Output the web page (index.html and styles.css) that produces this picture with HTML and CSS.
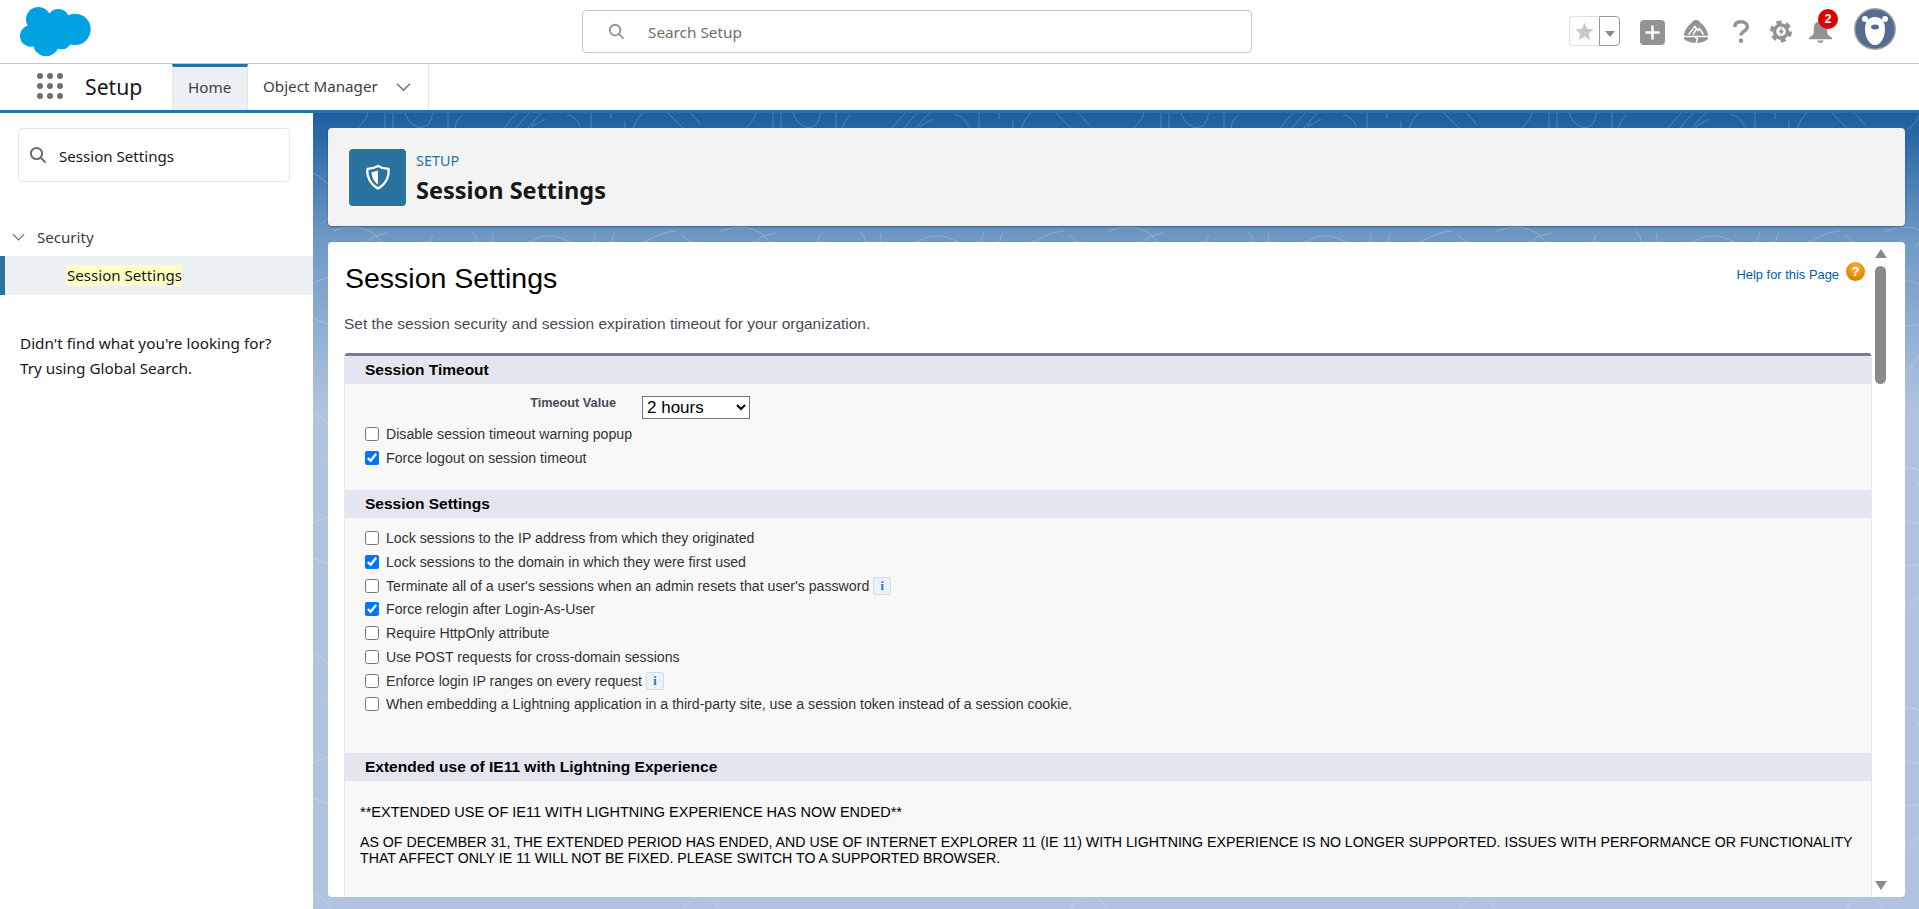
FILE: index.html
```html
<!DOCTYPE html>
<html lang="en">
<head>
    <meta charset="UTF-8">
    <title>Session Settings | Salesforce</title>
    <link rel="stylesheet" href="styles.css">
</head>
<body>
<header class="global-header">
    <svg class="logo" viewBox="0 0 300 186">
        <circle cx="85" cy="55" r="37"/>
        <circle cx="145" cy="57" r="33"/>
        <circle cx="195" cy="85" r="47"/>
        <circle cx="155" cy="115" r="30"/>
        <circle cx="108" cy="128" r="38"/>
        <circle cx="62" cy="105" r="32"/>
        <rect x="70" y="60" width="130" height="70"/>
    </svg>
    <div class="global-search">
        <svg class="search-icon" viewBox="0 0 18 18"><circle cx="7.500" cy="7.500" r="5.600"/><path d="M11.500 11.500l5 5"/></svg>
        <span>Search Setup</span>
    </div>
    <div class="global-actions">
        <div class="favorite">
            <span class="favorite-star">
                <svg viewBox="0 0 20 20"><path d="M10 0.800l2.800 6.200 6.700.7-5 4.500 1.400 6.600L10 15.400l-5.900 3.400 1.400-6.600-5-4.500 6.700-.7z"/></svg>
            </span>
            <span class="favorite-menu"></span>
        </div>
        <svg class="action action-plus" viewBox="0 0 25 25"><rect width="25" height="25" rx="4"/><path d="M12.500 5.500v14M5.500 12.500h14"/></svg>
        <svg class="action action-trail" viewBox="0 0 24 23">
            <path class="fill" d="M12 0c2.200 0 3.600 1.300 5 3.200 3 2.200 5.800 6 7 11.300v4.500c-3 2.500-7.500 4-12 4s-9-1.500-12-4v-4.500C1.200 9.200 4 5.400 7 3.200 8.400 1.300 9.800 0 12 0z"/>
            <path class="cut" d="M0 16.500h24M4.500 14.500l6.500-8 3 4 1.500-2 4 6M12.500 9l-3.500 5.500M10.500 16.500l3 2.500-1.500 4"/>
        </svg>
        <svg class="action action-help" viewBox="0 0 16 23"><path d="M1.800 7C1.800 3.200 4.500 1.800 8 1.800s6.300 1.700 6.300 4.900c0 4.500-6.300 4.300-6.300 8.800"/><circle cx="8" cy="20.700" r="2.300"/></svg>
        <svg class="action action-gear" viewBox="0 0 22 23">
            <circle class="gear-teeth" cx="11" cy="11.500" r="9"/>
            <circle class="gear-ring" cx="11" cy="11.500" r="6.500"/>
            <path class="gear-bolt" d="M12.500 6.500l-4 6h2.500l-1 4 4-6h-2.500z"/>
        </svg>
        <div class="bell-wrap">
            <svg class="action action-bell" viewBox="0 0 24 24"><path d="M12 1c4.500 0 7 3.500 7 8v4c0 2 2 3.500 5 5.500v1.500H0v-1.500C3 16.500 5 15 5 13V9c0-4.500 2.500-8 7-8z"/><path d="M8.500 21.500h7c-.5 1.700-2 2.500-3.500 2.500s-3-.8-3.500-2.500z"/></svg>
            <span class="bell-badge">2</span>
        </div>
        <svg class="avatar" viewBox="0 0 42 42">
            <circle class="avatar-bg" cx="21" cy="21" r="20.200"/>
            <circle class="avatar-face" cx="11" cy="11" r="3"/>
            <circle class="avatar-face" cx="31" cy="11" r="3"/>
            <path class="avatar-face" d="M21 9c7 0 10 5 10 12 0 8-4 16-10 16s-10-8-10-16c0-7 3-12 10-12z"/>
            <ellipse class="avatar-nose" cx="21" cy="19" rx="4" ry="2.500"/>
        </svg>
    </div>
</header>

<nav class="app-nav">
    <div class="launcher">
        <i></i><i></i><i></i><i></i><i></i><i></i><i></i><i></i><i></i>
    </div>
    <span class="app-name">Setup</span>
    <a class="tab tab-active">Home</a>
    <a class="tab tab-menu">Object Manager
        <svg class="chevron" viewBox="0 0 16 10"><path d="M1 1.500l7 7 7-7"/></svg>
    </a>
</nav>

<div class="workspace">
    <aside class="sidebar">
        <div class="quick-find">
            <svg class="search-icon dark" viewBox="0 0 18 18"><circle cx="7.500" cy="7.500" r="5.600"/><path d="M11.500 11.500l5 5"/></svg>
            <span>Session Settings</span>
        </div>
        <div class="tree-parent">
            <svg class="chevron small" viewBox="0 0 16 10"><path d="M1 1.500l7 7 7-7"/></svg>
            <span>Security</span>
        </div>
        <div class="tree-item"><mark>Session Settings</mark></div>
        <p class="tree-hint">Didn't find what you're looking for?<br>Try using Global Search.</p>
    </aside>

    <main class="main">
        <svg class="topo" width="100%" height="100%">
            <defs>
                <pattern id="topo-lines" width="388" height="240" patternUnits="userSpaceOnUse">
                    <path d="M55 0c-3 8-8 14-13 17M72 0v16M80 0v16M92 0c4 12 16 20 24 10 4-6 2-8 4-10M135 0v16M150 2c-6 4-8 10-8 14M190 16l14-16M202 16l14-16M214 16l14-16M232 6l-14 8M254 2c8 0 10 6 14 12M278 0v16M298 0v6M312 8v8M330 0c-6 6-8 10-10 16M355 0l16 16M378 0l10 12"/>
                    <path d="M20 118c20-8 40-4 50 14M75 120c-14 2-20 6-24 14M120 122c-4 4-4 12 0 18M136 130c-3 6 1 12 6 8s0-10-6-8M158 118c8 6 8 16 2 22M180 120c-2 8 0 14 4 18M210 134c14-14 34-14 48-4 14 8 24 4 24-12M302 120c-4 6-4 14-6 22M330 130c10-6 24-12 34-12M368 122c10 8 16 12 20 10"/>
                    <path d="M0 170c30-16 50 8 80 2s40-30 80-14 50 24 90 8 70-10 138 2"/>
                    <path d="M0 60c20 10 30 30 10 50M388 60c-20 10-30 30-10 50M0 205c40 20 70-4 110 6s60 20 110 2 90-10 168 2"/>
                </pattern>
            </defs>
            <rect width="100%" height="100%" fill="url(#topo-lines)"/>
        </svg>

        <section class="page-header">
            <div class="page-icon">
                <svg viewBox="0 0 26 26">
                    <path class="shield-line" d="M13 2c3 1.800 6.500 2.800 10.500 2.800 1.300 7.500-3 15.700-10.500 19.700C5.500 20.500 1.200 12.300 2.500 4.800 6.500 4.800 10 3.800 13 2z"/>
                    <path class="shield-fill" d="M13 6.500c-2 .9-4.200 1.500-6.500 1.700 0 4.800 2.500 9.500 6.500 12.300z"/>
                </svg>
            </div>
            <div class="page-heading">
                <div class="page-eyebrow">SETUP</div>
                <div class="page-title">Session Settings</div>
            </div>
        </section>

        <section class="content-card">
            <div class="content">
                <div class="title-row">
                    <h1>Session Settings</h1>
                    <a class="help-link">Help for this Page <span class="help-icon">?</span></a>
                </div>
                <p class="intro">Set the session security and session expiration timeout for your organization.</p>

                <div class="block">
                    <h2 class="block-head">Session Timeout</h2>
                    <div class="block-body body-timeout">
                        <div class="field">
                            <label class="field-label">Timeout Value</label>
                            <select class="field-select"><option>2 hours</option></select>
                        </div>
                        <label class="row"><input type="checkbox"> Disable session timeout warning popup</label>
                        <label class="row"><input type="checkbox" checked> Force logout on session timeout</label>
                    </div>

                    <h2 class="block-head">Session Settings</h2>
                    <div class="block-body body-settings">
                        <label class="row"><input type="checkbox"> Lock sessions to the IP address from which they originated</label>
                        <label class="row"><input type="checkbox" checked> Lock sessions to the domain in which they were first used</label>
                        <label class="row row-info"><input type="checkbox"> Terminate all of a user's sessions when an admin resets that user's password <span class="info">i</span></label>
                        <label class="row"><input type="checkbox" checked> Force relogin after Login-As-User</label>
                        <label class="row"><input type="checkbox"> Require HttpOnly attribute</label>
                        <label class="row"><input type="checkbox"> Use POST requests for cross-domain sessions</label>
                        <label class="row row-info"><input type="checkbox"> Enforce login IP ranges on every request <span class="info">i</span></label>
                        <label class="row"><input type="checkbox"> When embedding a Lightning application in a third-party site, use a session token instead of a session cookie.</label>
                    </div>

                    <h2 class="block-head">Extended use of IE11 with Lightning Experience</h2>
                    <div class="block-body body-notice">
                        <p class="notice-lead">**EXTENDED USE OF IE11 WITH LIGHTNING EXPERIENCE HAS NOW ENDED**</p>
                        <p>AS OF DECEMBER 31, THE EXTENDED PERIOD HAS ENDED, AND USE OF INTERNET EXPLORER 11 (IE 11) WITH LIGHTNING EXPERIENCE IS NO LONGER SUPPORTED. ISSUES WITH PERFORMANCE OR FUNCTIONALITY THAT AFFECT ONLY IE 11 WILL NOT BE FIXED. PLEASE SWITCH TO A SUPPORTED BROWSER.</p>
                    </div>
                </div>
            </div>
            <div class="scrollbar">
                <span class="arrow-up"></span>
                <span class="thumb"></span>
                <span class="arrow-down"></span>
            </div>
        </section>
    </main>
</div>
</body>
</html>
```

FILE: styles.css
```css
* {
    box-sizing: border-box;
}

html, body {
    height: 100%;
}

body {
    margin: 0;
    overflow: hidden;
    display: flex;
    flex-direction: column;
    font-family: "Noto Sans", "Open Sans", "Liberation Sans", sans-serif;
    color: #181818;
    background: #fff;
}

/* Global header */
.global-header {
    flex: none;
    height: 64px;
    display: flex;
    align-items: center;
    border-bottom: 1px solid #c9c9c9;
    position: relative;
}

.logo {
    width: 100px;
    height: 62px;
    margin-left: 10px;
    fill: #00a1e0;
}

.global-search {
    width: 670px;
    height: 43px;
    margin-left: 472px;
    padding-left: 25px;
    display: flex;
    align-items: center;
    gap: 23px;
    border: 1px solid #c9c9c9;
    border-radius: 4px;
    font-size: 15.300px;
    color: #706e6b;
}

.search-icon {
    width: 17px;
    height: 17px;
    fill: none;
    stroke: #939393;
    stroke-width: 2;
}

.search-icon.dark {
    stroke: #706e6b;
}

.global-actions {
    position: absolute;
    left: 1569px;
    top: 0;
    height: 63px;
    width: 330px;
}

.favorite {
    position: absolute;
    left: 0;
    top: 16px;
    width: 51px;
    height: 30px;
    display: flex;
}

.favorite-star {
    width: 30px;
    display: flex;
    align-items: center;
    justify-content: center;
    border: 1px solid #e0e0e0;
    border-right: none;
    border-radius: 4px 0 0 4px;
}

.favorite-star svg {
    width: 19px;
    height: 19px;
    fill: #c9c9c9;
}

.favorite-menu {
    width: 21px;
    border: 1px solid #969696;
    border-radius: 0 4px 4px 0;
    position: relative;
}

.favorite-menu::after {
    content: "";
    position: absolute;
    left: 5px;
    top: 14px;
    border-left: 5px solid transparent;
    border-right: 5px solid transparent;
    border-top: 6px solid #8a8a8a;
}

.action {
    position: absolute;
    top: 20px;
    fill: #939393;
}

.action-plus {
    left: 71px;
    width: 25px;
    height: 25px;
}

.action-plus path {
    stroke: #fff;
    stroke-width: 2.400;
}

.action-trail {
    left: 115px;
    width: 24px;
    height: 23px;
}

.action-trail .cut {
    fill: none;
    stroke: #fff;
    stroke-width: 1.500;
}

.action-help {
    left: 164px;
    width: 16px;
    height: 23px;
}

.action-help path {
    fill: none;
    stroke: #939393;
    stroke-width: 3.400;
}

.action-gear {
    left: 201px;
    width: 22px;
    height: 23px;
    fill: none;
}

.gear-teeth {
    stroke: #939393;
    stroke-width: 4;
    stroke-dasharray: 5 4.420;
}

.gear-ring {
    stroke: #939393;
    stroke-width: 3.500;
}

.gear-bolt {
    fill: #939393;
}

.bell-wrap {
    position: absolute;
    left: 240px;
    top: 0;
}

.action-bell {
    left: 0;
    width: 23px;
    height: 23px;
}

.bell-badge {
    position: absolute;
    left: 9px;
    top: 9px;
    width: 20px;
    height: 20px;
    border-radius: 50%;
    background: #e00000;
    color: #fff;
    font: bold 12px/20px "Liberation Sans", sans-serif;
    text-align: center;
}

.avatar {
    position: absolute;
    left: 285px;
    top: 8px;
    width: 42px;
    height: 42px;
}

circle.avatar-bg {
    fill: #546c8f;
    stroke: #a0a0a0;
    stroke-width: 1.500;
}

.avatar-nose {
    fill: #546c8f;
}

.avatar-face {
    fill: #fff;
}

/* App nav */
.app-nav {
    flex: none;
    height: 49px;
    display: flex;
    align-items: stretch;
    border-bottom: 3px solid #2a739e;
}

.launcher {
    width: 26px;
    height: 26px;
    margin: 9px 0 0 37px;
    display: grid;
    grid-template-columns: repeat(3, 6px);
    grid-auto-rows: 6px;
    gap: 4px;
}

.launcher i {
    background: #706e6b;
    border-radius: 50%;
}

.app-name {
    width: 87px;
    margin-left: 22px;
    font-size: 21.200px;
    line-height: 45px;
}

.tab {
    display: flex;
    align-items: center;
    padding: 0 15px 2px;
    font-size: 15.200px;
    white-space: nowrap;
    color: #3e3e3c;
    border-right: 1px solid #e5e5e5;
}

.tab-active {
    width: 76px;
    padding-bottom: 4px;
    background: #eaf0f4;
    border-top: 3px solid #2a739e;
    border-left: 1px solid #e5e5e5;
}

.tab-menu {
    width: 181px;
    gap: 18px;
}

.chevron {
    flex: none;
    width: 15px;
    height: 10px;
    margin-top: 2px;
    fill: none;
    stroke: #706e6b;
    stroke-width: 1.500;
}

.chevron.small {
    width: 13px;
    height: 8px;
    margin-top: 0;
}

/* Main area */
.workspace {
    flex: 1;
    min-height: 0;
    display: flex;
}

.sidebar {
    flex: none;
    width: 313px;
    padding-top: 15px;
    font-size: 15.100px;
}

.quick-find {
    width: 272px;
    height: 54px;
    margin-left: 18px;
    padding-left: 10px;
    display: flex;
    align-items: center;
    gap: 12px;
    border: 1px solid #e5e5e5;
    border-radius: 4px;
}

.quick-find span {
    padding-top: 2px;
}

.quick-find .search-icon {
    width: 18px;
    height: 18px;
}

.tree-parent {
    height: 38px;
    margin-top: 36px;
    padding-left: 12px;
    display: flex;
    align-items: center;
    gap: 12px;
    color: #3e3e3c;
}

.tree-item {
    height: 39px;
    padding-left: 62px;
    display: flex;
    align-items: center;
    background: #eaf0f4;
    border-left: 5px solid #2a739e;
}

.tree-item mark {
    background: #ffffc4;
    color: #181818;
    line-height: 21px;
}

.tree-hint {
    margin: 36px 0 0 20px;
    font-size: 15.300px;
    line-height: 25px;
}

.main {
    flex: 1;
    min-width: 0;
    position: relative;
    padding: 15px 14px 12px 15px;
    display: flex;
    flex-direction: column;
    gap: 16px;
    background: linear-gradient(#1b5f9e 0, #6f98c5 125px, #b0c4df 300px);
}

.topo {
    position: absolute;
    left: 0;
    top: 0;
    fill: none;
}

.topo path {
    fill: none;
    stroke: rgba(255, 255, 255, 0.22);
    stroke-width: 1;
}

.page-header {
    position: relative;
    flex: none;
    height: 98px;
    padding-left: 21px;
    display: flex;
    align-items: center;
    gap: 10px;
    background: #f3f3f3;
    border-radius: 4px;
    box-shadow: 0 1px 2px rgba(0, 0, 0, 0.35);
}

.page-icon {
    width: 57px;
    height: 57px;
    display: flex;
    align-items: center;
    justify-content: center;
    background: #2a739e;
    border-radius: 4px;
}

.page-icon svg {
    width: 26px;
    height: 26px;
    fill: none;
}

.shield-line {
    stroke: #fff;
    stroke-width: 2.200;
}

.shield-fill {
    fill: #fff;
}

.page-heading {
    padding-top: 3px;
}

.page-eyebrow {
    font-size: 14.400px;
    line-height: 18px;
    color: #2a739e;
}

.page-title {
    font-size: 23.500px;
    font-weight: bold;
    line-height: 30px;
    margin-top: 5px;
}

.content-card {
    position: relative;
    flex: 1;
    min-height: 0;
    display: flex;
    overflow: hidden;
    background: #fff;
    border-radius: 4px;
}

.content {
    width: 1545px;
    padding: 0 1px 0 16px;
    font-family: "Liberation Sans", Arial, sans-serif;
}

.title-row {
    height: 52px;
    padding-top: 20px;
    display: flex;
    justify-content: space-between;
}

h1 {
    margin: 0 0 0 1px;
    font-size: 28.500px;
    font-weight: normal;
    line-height: 32px;
    color: #000;
}

.help-link {
    display: flex;
    align-items: flex-start;
    gap: 7px;
    margin-right: 7px;
    font-size: 12.900px;
    line-height: 25px;
    color: #015ba7;
}

.help-icon {
    width: 19px;
    height: 19px;
    border-radius: 50%;
    background: radial-gradient(circle at 50% 30%, #f7b23c, #e08600 70%, #b96d00);
    color: #fff;
    font-size: 13px;
    font-weight: bold;
    line-height: 19px;
    text-align: center;
}

.intro {
    margin: 21px 0 0;
    font-size: 15.480px;
    line-height: 18px;
    color: #4a4a56;
}

.block {
    margin-top: 20px;
    background: #f8f8f8;
    border-top: 3px solid #747c9c;
    border-left: 1px solid #e3e6ef;
    border-right: 1px solid #e3e6ef;
    border-radius: 4px 4px 0 0;
}

.block-head {
    height: 28px;
    margin: 0;
    padding-left: 20px;
    font-size: 15.500px;
    font-weight: bold;
    line-height: 28px;
    color: #000;
    background: #e3e6ef;
}

.block-body {
    padding-left: 20px;
}

.body-timeout {
    height: 106px;
    padding-top: 12px;
}

.body-settings {
    height: 235px;
    padding-top: 8px;
}

.body-notice {
    padding: 23px 12px 30px 15px;
    font-size: 14.180px;
    line-height: 16px;
    color: #000;
}

.body-notice p {
    margin: 0 0 14px;
}

.body-notice .notice-lead {
    font-size: 14.500px;
}

.field {
    height: 26px;
    display: flex;
    align-items: flex-start;
}

.field-label {
    width: 251px;
    font-size: 12.700px;
    font-weight: bold;
    line-height: 14px;
    text-align: right;
    color: #4a4a56;
}

.field-select {
    width: 108px;
    height: 23px;
    margin-left: 26px;
    font-family: "Liberation Sans", Arial, sans-serif;
    font-size: 17px;
    background: #fff;
}

.row {
    height: 24px;
    display: flex;
    align-items: center;
    gap: 7px;
    font-size: 14.150px;
    color: #333;
}

.row-info {
    height: 23px;
}

.row input {
    flex: none;
    width: 14px;
    height: 14px;
    margin: 0;
}

.info {
    flex: none;
    width: 18px;
    height: 18px;
    display: block;
    margin-left: -3px;
    border: 1px solid #d5dce6;
    border-radius: 2px;
    background: #e9f1f9;
    color: #1b6fc0;
    font: bold 12px/16px "Liberation Serif", serif;
    text-align: center;
}

.scrollbar {
    width: 15px;
    padding-top: 7px;
    display: flex;
    flex-direction: column;
    align-items: center;
    background: #fdfdfd;
}

.arrow-up {
    border-left: 6px solid transparent;
    border-right: 6px solid transparent;
    border-bottom: 9px solid #8a8a8a;
}

.thumb {
    width: 11px;
    height: 118px;
    margin-top: 8px;
    border-radius: 6px;
    background: #8a8a8a;
}

.arrow-down {
    margin-top: 497px;
    border-left: 6px solid transparent;
    border-right: 6px solid transparent;
    border-top: 9px solid #8a8a8a;
}
```
